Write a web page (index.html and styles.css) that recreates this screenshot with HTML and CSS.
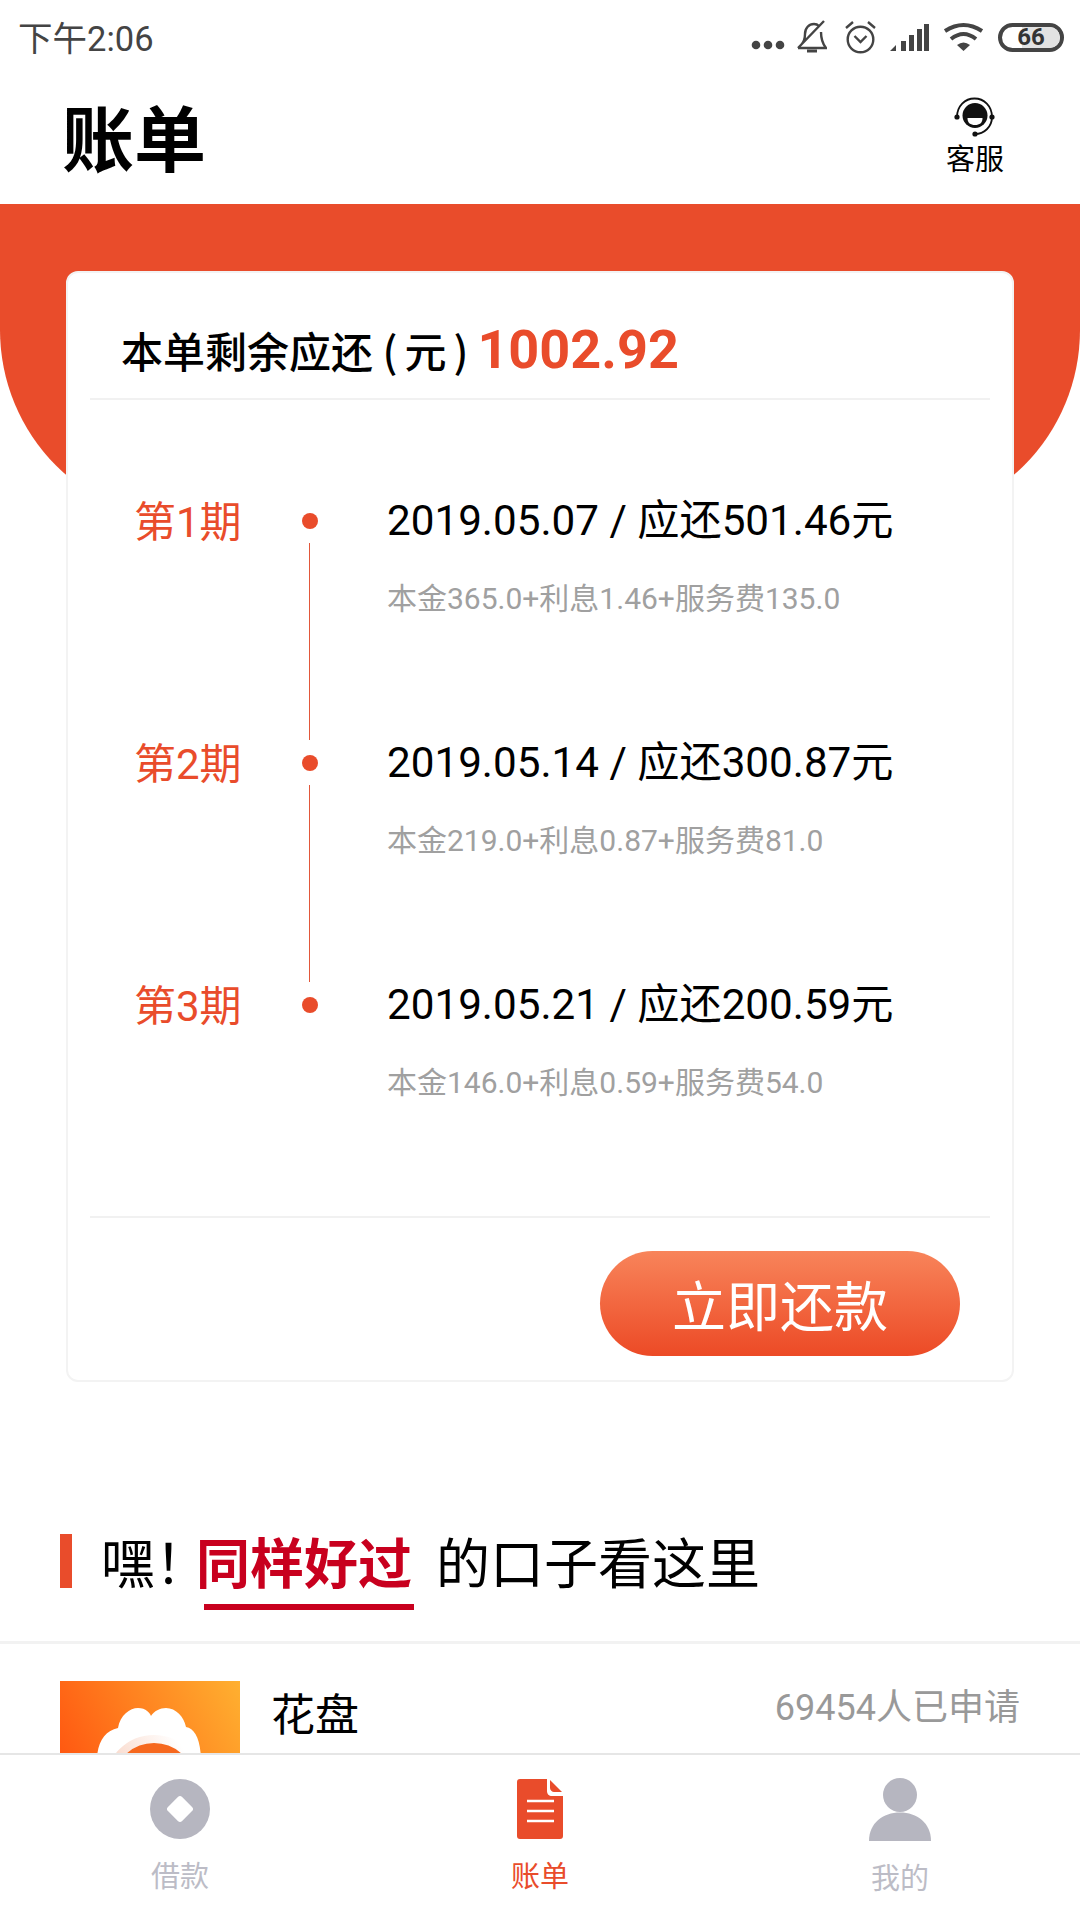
FILE: index.html
```html
<!DOCTYPE html>
<html lang="zh-CN">
<head>
    <meta charset="UTF-8">
    <meta name="viewport" content="width=device-width, initial-scale=1.0">
    <title>账单</title>
    <link rel="stylesheet" href="styles.css">
</head>
<body>
<div class="page">
    <div class="status-bar">
        <span class="status-time">下午2:06</span>
        <div class="status-icons">
            <svg class="icon-dots" width="34" height="10" viewBox="0 0 34 10" fill="#444"><circle cx="5" cy="5" r="4.300"/><circle cx="17" cy="5" r="4.300"/><circle cx="29" cy="5" r="4.300"/></svg>
            <svg class="icon-bell" width="30" height="34" viewBox="0 0 30 34" fill="none" stroke="#444" stroke-width="2.400"><path d="M4 25c3-3 4-6 4-11 0-6 4-10 9-10 2 0 4 1 5 2M24 12c0 7 1 11 5 16H1M27 1L1 28"/><path d="M10 31h10" stroke-width="3"/></svg>
            <svg class="icon-alarm" width="31" height="34" viewBox="0 0 31 34" fill="none" stroke="#444" stroke-width="2.400"><circle cx="15.500" cy="19.500" r="12.800"/><path d="M9.500 16l6 6 6-6"/><path d="M1 8l7-6M30 8l-7-6"/></svg>
            <svg class="icon-signal" width="39" height="28" viewBox="0 0 39 28" fill="#444"><path d="M0 28l6-6v6zM11 18h5v10h-5zM19 12h5v16h-5zM27 6h5v22h-5zM34 1h5v27h-5z"/></svg>
            <svg class="icon-wifi" width="41" height="30" viewBox="0 0 41 30" fill="none" stroke="#444" stroke-width="4"><path d="M2 9Q20.500-3 39 9M8 17Q20.500 7 33 17"/><path d="M20.500 29L14 23Q20.500 18 27 23z" fill="#444" stroke="none"/></svg>
            <div class="battery"><span class="battery-level"></span><span class="battery-text">66</span></div>
        </div>
    </div>

    <div class="top-bar">
        <h1 class="page-title">账单</h1>
        <div class="service">
            <svg width="44" height="42" viewBox="0 0 44 42" fill="none" stroke="#111" stroke-width="1.800">
                <path d="M4 20C4 9 12 1.500 21.500 1.500S39 9 39 20C39 30 31 37 22 37"/>
                <circle cx="22" cy="18.500" r="12.500" fill="#111" stroke="none"/>
                <path d="M14.500 21h15c0 5-3 7-7.500 7s-7.500-2-7.500-7z" fill="#fff" stroke="none"/>
                <circle cx="4" cy="20" r="2.600" fill="#111" stroke="none"/>
                <circle cx="39" cy="20" r="2.600" fill="#111" stroke="none"/>
                <circle cx="22" cy="37" r="2.600" fill="#111" stroke="none"/>
            </svg>
            <span>客服</span>
        </div>
    </div>

    <div class="content">
        <section class="bill">
            <div class="card">
                <div class="card-head">
                    <span class="due-label">本单剩余应还 (<span class="due-unit">元</span>)</span>
                    <span class="due-amount">1002.92</span>
                </div>
                <div class="periods">
                    <div class="period">
                        <span class="period-name">第1期</span>
                        <div class="period-dot"></div>
                        <div class="period-info">
                            <div class="period-main">2019.05.07 / 应还501.46元</div>
                            <div class="period-sub">本金365.0+利息1.46+服务费135.0</div>
                        </div>
                    </div>
                    <div class="period">
                        <span class="period-name">第2期</span>
                        <div class="period-dot"></div>
                        <div class="period-info">
                            <div class="period-main">2019.05.14 / 应还300.87元</div>
                            <div class="period-sub">本金219.0+利息0.87+服务费81.0</div>
                        </div>
                    </div>
                    <div class="period">
                        <span class="period-name">第3期</span>
                        <div class="period-dot"></div>
                        <div class="period-info">
                            <div class="period-main">2019.05.21 / 应还200.59元</div>
                            <div class="period-sub">本金146.0+利息0.59+服务费54.0</div>
                        </div>
                    </div>
                </div>
                <div class="card-foot">
                    <button class="pay-button">立即还款</button>
                </div>
            </div>
        </section>

        <div class="section-head">
            <span class="section-mark"></span>
            <span class="section-hey">嘿！</span>
            <span class="section-key">同样好过</span>
            <span class="section-rest">的口子看这里</span>
        </div>

        <div class="loan">
            <svg class="loan-logo" width="180" height="180" viewBox="0 0 180 180">
                <defs>
                    <linearGradient id="logoBg" x1="0" y1="0.5" x2="1" y2="0">
                        <stop offset="0" stop-color="#ff5510"/>
                        <stop offset="1" stop-color="#ffb030"/>
                    </linearGradient>
                    <linearGradient id="logoRing" x1="0" y1="1" x2="1" y2="0.4">
                        <stop offset="0" stop-color="#f6c4ae"/>
                        <stop offset="1" stop-color="#fff"/>
                    </linearGradient>
                </defs>
                <rect width="180" height="180" fill="url(#logoBg)"/>
                <path d="M38 90C34 68 42 50 58 47C60 34 70 27 78 27C86 27 90 32 91 35C94 30 100 27 106 27C116 27 124 36 126 46C136 48 142 60 141 90V130H38z" fill="#fff"/>
                <circle cx="94" cy="103" r="45" fill="#f6681e" stroke="url(#logoRing)" stroke-width="8"/>
            </svg>
            <span class="loan-name">花盘</span>
            <span class="loan-count">69454人已申请</span>
        </div>
    </div>

    <nav class="tab-bar">
        <div class="tab">
            <svg width="60" height="60" viewBox="0 0 60 60"><circle cx="30" cy="30" r="30" fill="#b6b6c0"/><rect x="20" y="20" width="20" height="20" rx="3" fill="#fff" transform="rotate(45 30 30)"/></svg>
            <span>借款</span>
        </div>
        <div class="tab is-active">
            <svg width="46" height="60" viewBox="0 0 46 60">
                <path d="M3 0h27v12c0 3 2 5 5 5h11v40c0 2-1 3-3 3H3c-2 0-3-1-3-3V3c0-2 1-3 3-3z" fill="#e94c2b"/>
                <path d="M33 1l12 12h-8c-2 0-4-2-4-4z" fill="#e94c2b"/>
                <path d="M10 22h27M10 32h27M10 42h27" stroke="#fff" stroke-width="2.500"/>
            </svg>
            <span>账单</span>
        </div>
        <div class="tab">
            <svg class="icon-person" width="62" height="63" viewBox="0 0 62 63" fill="#b6b6c0"><circle cx="31" cy="17" r="17"/><path d="M0 63C0 45 14 34.500 31 34.500S62 45 62 63z"/></svg>
            <span>我的</span>
        </div>
    </nav>
</div>
</body>
</html>
```

FILE: styles.css
```css
* {
    box-sizing: border-box;
}
body {
    margin: 0;
    background-color: #fff;
    font-family: Roboto, "Noto Sans CJK SC", sans-serif;
    color: #000;
}
.page {
    width: 1080px;
    height: 1920px;
    display: flex;
    flex-direction: column;
    overflow: hidden;
}

/* status bar */
.status-bar {
    height: 74px;
    flex: none;
    display: flex;
    align-items: center;
    justify-content: space-between;
    padding: 0 16px 2px 18px;
    color: #444;
}
.status-time {
    font-size: 34.500px;
}
.status-icons {
    display: flex;
    align-items: center;
    gap: 14px;
    margin-top: 2px;
}
.icon-dots {
    margin: 16px -2px 0 0;
}
.icon-bell {
    margin-right: 4px;
}
.battery {
    position: relative;
    width: 66px;
    height: 29px;
    border: 4px solid #444;
    border-radius: 15px;
    overflow: hidden;
    text-align: center;
}
.battery-level {
    position: absolute;
    left: 0;
    top: 0;
    bottom: 0;
    width: 66%;
    background-color: #e2e2e2;
    margin-left: 34%;
}
.battery-text {
    position: relative;
    font-size: 24px;
    font-weight: 700;
    line-height: 21px;
    display: block;
    color: #333;
}

/* title */
.top-bar {
    height: 130px;
    flex: none;
    display: flex;
    align-items: center;
    justify-content: space-between;
    padding: 0 76px 0 62px;
}
.page-title {
    margin: 6px 0 0;
    font-size: 72px;
    font-weight: 700;
    line-height: 1;
}
.service {
    display: flex;
    flex-direction: column;
    align-items: center;
    font-size: 29px;
    line-height: 36px;
    margin-bottom: 3px;
}
.service span {
    margin-top: 3px;
}

/* bill card */
.content {
    flex: 1;
    overflow: hidden;
}
.bill {
    position: relative;
    padding: 67px 66px 0;
}
.bill::before {
    content: "";
    position: absolute;
    left: 0;
    right: 0;
    top: 0;
    height: 318px;
    background-color: #e94c2b;
    border-radius: 0 0 192px 192px;
}
.card {
    position: relative;
    background-color: #fff;
    border: 2px solid #f3f3f3;
    border-radius: 12px;
    padding: 0 22px;
    height: 1111px;
}
.card-head {
    height: 127px;
    padding: 28px 0 0 31px;
    display: flex;
    align-items: center;
    gap: 9px;
    border-bottom: 2px solid #f1f1f1;
}
.due-label {
    font-family: "Noto Sans CJK SC", sans-serif;
    font-size: 42px;
    font-weight: 500;
    white-space: nowrap;
}
.due-unit {
    margin: 0 7px;
}
.due-amount {
    font-size: 54px;
    font-weight: 700;
    color: #e94c2b;
}
.periods {
    height: 818px;
    padding-top: 94px;
    border-bottom: 2px solid #f1f1f1;
}
.period {
    height: 242px;
    display: flex;
    align-items: flex-start;
}
.period:last-child {
    height: 198px;
}
.period-name {
    width: 212px;
    padding-left: 44px;
    font-size: 42px;
    line-height: 58px;
    color: #e94c2b;
    white-space: nowrap;
}
.period-dot {
    position: relative;
    width: 16px;
    height: 16px;
    margin-top: 19px;
    border-radius: 50%;
    background-color: #e94c2b;
    flex: none;
}
.period-dot::after {
    content: "";
    position: absolute;
    left: 7px;
    top: 30px;
    width: 1px;
    height: 197px;
    background-color: #e2573a;
}
.period:last-child .period-dot::after {
    display: none;
}
.period-info {
    margin: -1px 0 0 69px;
}
.period-main {
    font-size: 42.200px;
    line-height: 56px;
    white-space: nowrap;
}
.period-sub {
    margin-top: 30px;
    font-size: 30px;
    line-height: 40px;
    color: #a0a0a0;
    white-space: nowrap;
}
.card-foot {
    display: flex;
    justify-content: flex-end;
    padding: 33px 30px 0 0;
}
.pay-button {
    width: 360px;
    height: 105px;
    border: none;
    border-radius: 53px;
    background: linear-gradient(#f8845a, #ec4a26);
    color: #fff;
    font-family: "Noto Sans CJK SC", sans-serif;
    font-size: 54px;
}

/* recommend */
.section-head {
    margin-top: 143px;
    height: 119px;
    padding: 0 0 0 60px;
    display: flex;
    align-items: flex-start;
    border-bottom: 3px solid #f2f2f2;
    font-size: 54px;
    line-height: 82px;
}
.section-mark {
    width: 12px;
    height: 54px;
    margin: 9px 29px 0 0;
    background-color: #e94c2b;
}
.section-hey {
    width: 95px;
    font-feature-settings: "halt";
}
.section-key {
    position: relative;
    width: 216px;
    margin-right: 24px;
    color: #c8001e;
    font-weight: 700;
    white-space: nowrap;
}
.section-key::after {
    content: "";
    position: absolute;
    left: 8px;
    right: -2px;
    top: 79px;
    height: 6px;
    background-color: #c8001e;
}
.section-rest {
    white-space: nowrap;
}
.loan {
    display: flex;
    align-items: flex-start;
    padding: 37px 60px 0;
}
.loan-logo {
    flex: none;
}
.loan-name {
    margin: 5px 0 0 31px;
    font-size: 44px;
    line-height: 60px;
}
.loan-count {
    margin: 2px 0 0 auto;
    font-size: 36px;
    line-height: 50px;
    color: #999;
}

/* tabs */
.tab-bar {
    position: relative;
    height: 167px;
    flex: none;
    display: flex;
    background-color: #fff;
    border-top: 2px solid #e6e6e6;
}
.tab {
    flex: 1;
    display: flex;
    flex-direction: column;
    align-items: center;
    justify-content: flex-start;
    padding-top: 24px;
    font-size: 29px;
    line-height: 40px;
    color: #bcbcc6;
}
.tab span {
    margin-top: 18px;
}
.tab.is-active {
    color: #e94c2b;
}
.icon-person {
    margin-top: -1px;
}
```
